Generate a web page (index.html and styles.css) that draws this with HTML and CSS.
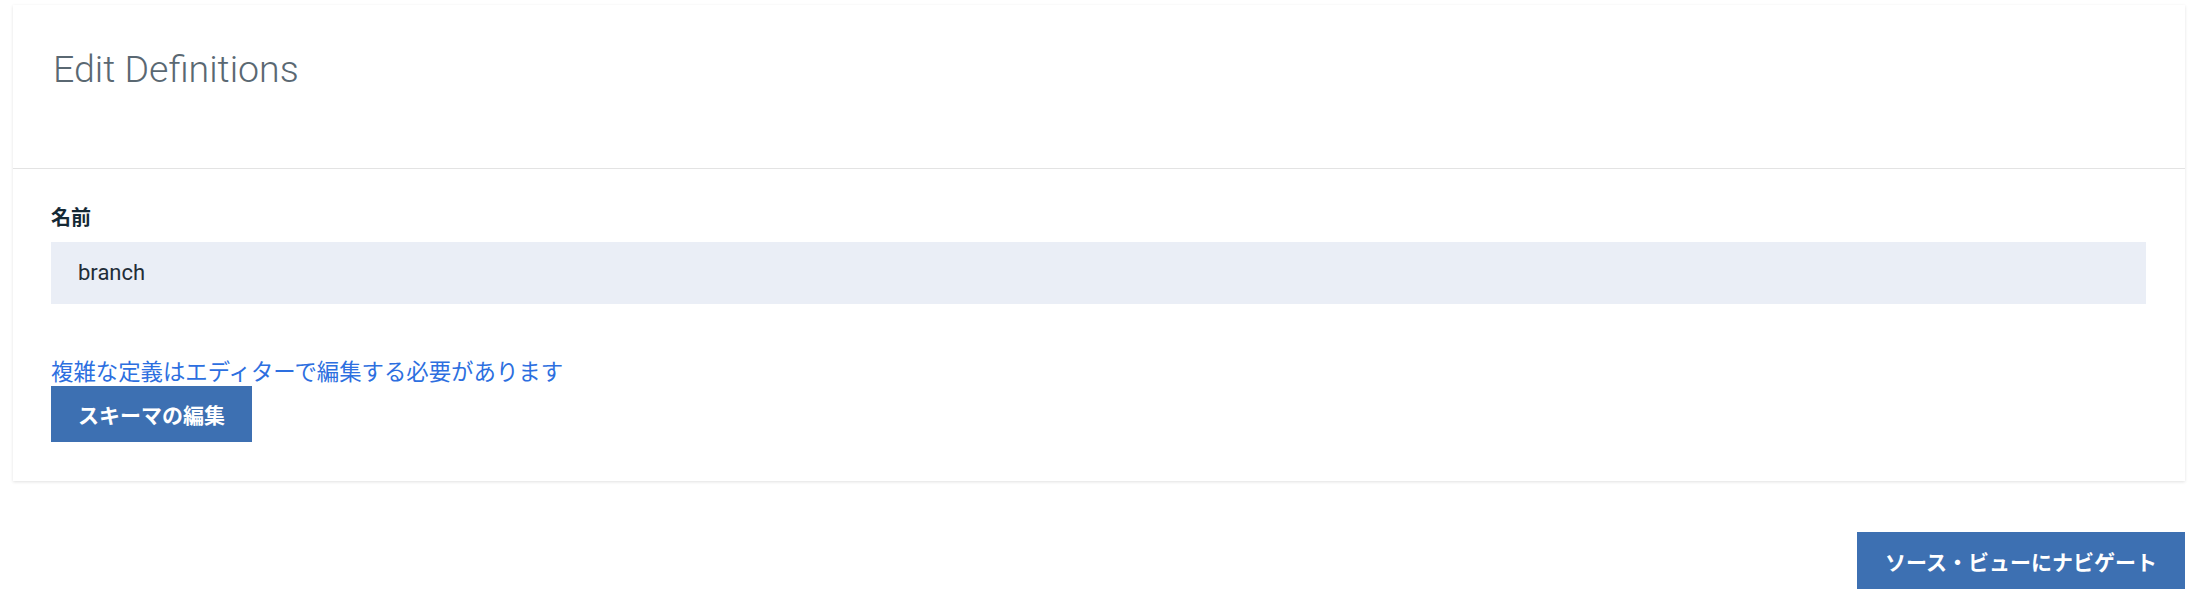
FILE: index.html
```html
<!DOCTYPE html>
<html lang="ja">
<head>
<meta charset="utf-8">
<title>Edit Definitions</title>
<link rel="stylesheet" href="styles.css">
</head>
<body>
  <main class="page">
    <section class="card">
      <header class="card-header">
        <h1 class="card-title">Edit Definitions</h1>
      </header>
      <div class="card-body">
        <label class="field-label" for="name">名前</label>
        <div class="text-input" id="name">branch</div>
        <a class="hint-link" href="#">複雑な定義はエディターで編集する必要があります</a>
        <button class="btn" type="button">スキーマの編集</button>
      </div>
    </section>
    <div class="actions">
      <button class="btn btn-wide" type="button">ソース・ビューにナビゲート</button>
    </div>
  </main>
</body>
</html>
```

FILE: styles.css
```css
* {
  box-sizing: border-box;
}

html, body {
  margin: 0;
  background: #ffffff;
}

body {
  font-family: "Roboto", "Noto Sans CJK JP", sans-serif;
  color: #152935;
}

.page {
  padding: 5px 27px 0 13px;
}

.card {
  background: #ffffff;
  box-shadow: 0 1px 3px 0 rgba(0, 0, 0, 0.12);
}

.card-header {
  height: 164px;
  padding: 46px 40px 0 40px;
  border-bottom: 1px solid #e3e3e3;
}

.card-title {
  margin: 0;
  font-family: "Roboto", sans-serif;
  font-weight: 300;
  font-size: 37.5px;
  line-height: 1;
  color: #5a6872;
}

.card-body {
  display: flex;
  flex-direction: column;
  align-items: flex-start;
  padding: 34px 39px 39px 38px;
}

.field-label {
  display: block;
  font-family: "Noto Sans CJK JP", sans-serif;
  font-weight: 700;
  font-size: 20px;
  line-height: 28px;
  color: #152935;
  margin-bottom: 11px;
}

.text-input {
  align-self: stretch;
  height: 62px;
  line-height: 62px;
  padding: 0 27px;
  background: #eaeef6;
  font-family: "Roboto", sans-serif;
  font-size: 22px;
  color: #1f2d38;
}

.hint-link {
  display: block;
  margin-top: 53px;
  margin-bottom: 3px;
  font-family: "Noto Sans CJK JP", sans-serif;
  font-size: 22.4px;
  line-height: 26px;
  color: #2d6fe0;
  text-decoration: none;
}

.btn {
  display: inline-flex;
  align-items: center;
  justify-content: center;
  height: 56px;
  padding: 0 27px;
  border: 0;
  border-radius: 0;
  background: #3d70b2;
  color: #ffffff;
  font-family: "Noto Sans CJK JP", sans-serif;
  font-weight: 700;
  font-size: 21px;
  cursor: pointer;
}

.actions {
  display: flex;
  justify-content: flex-end;
  margin-top: 51px;
}

.btn-wide {
  height: 57px;
  padding: 0 28px;
}
```
